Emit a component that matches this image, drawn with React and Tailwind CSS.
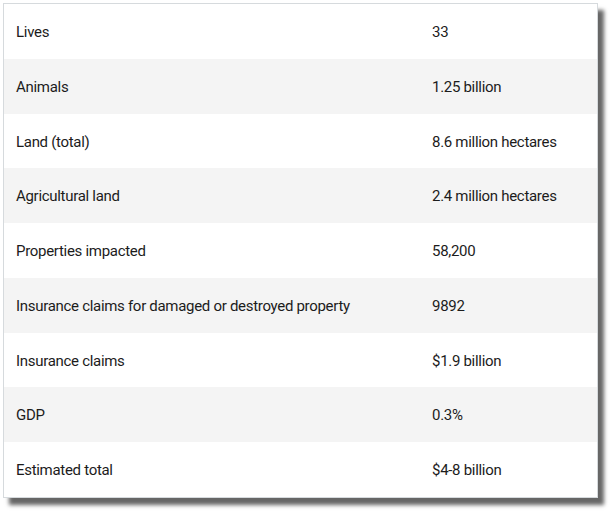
import React from "react";

const rows = [
    ["Lives", "33"],
    ["Animals", "1.25 billion"],
    ["Land (total)", "8.6 million hectares"],
    ["Agricultural land", "2.4 million hectares"],
    ["Properties impacted", "58,200"],
    ["Insurance claims for damaged or destroyed property", "9892"],
    ["Insurance claims", "$1.9 billion"],
    ["GDP", "0.3%"],
    ["Estimated total", "$4-8 billion"],
];

const App = () => {
    return (
        <div className="w-[615px] h-[515px] bg-white pl-[3px] pt-[3px]">
            <div
                className="w-[595px] border border-[#d6dadd] bg-white shadow-[6px_7px_4px_rgba(0,0,0,0.6)] text-[15px] tracking-[-0.3px] text-[#1c1c1c]"
                style={{ fontFamily: 'Roboto, "Liberation Sans", sans-serif' }}
            >
                {rows.map(([label, value], i) => (
                    <div
                        key={label}
                        className={`flex items-center pt-[2px] h-[54.75px] ${i % 2 === 1 ? "bg-[#f4f4f4]" : "bg-white"}`}
                    >
                        <div className="w-[428px] pl-[12px]">{label}</div>
                        <div>{value}</div>
                    </div>
                ))}
            </div>
        </div>
    );
};

export default App;
